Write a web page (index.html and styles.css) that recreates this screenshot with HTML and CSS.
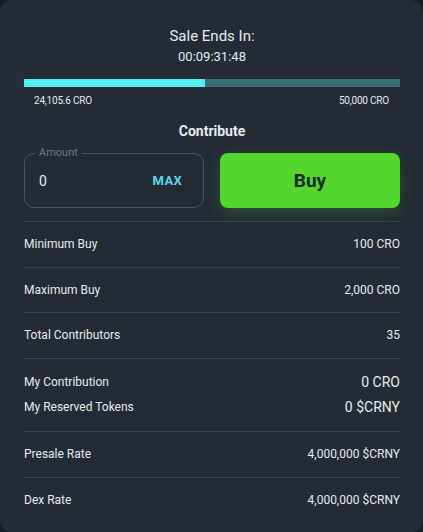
FILE: index.html
```html
<!doctype html>
<html lang="en">
<head>
	<meta charset="utf-8">
	<title>Presale</title>
<link rel="stylesheet" href="styles.css">
</head>
<body>
<div class="card">
	<div class="title">Sale Ends In:</div>
	<div class="timer">00:09:31:48</div>

	<div class="progress"><div class="progress-fill" style="width: 48.2%"></div></div>
	<div class="range">
		<span>24,105.6 CRO</span>
		<span>50,000 CRO</span>
	</div>

	<div class="heading">Contribute</div>
	<div class="contribute">
		<div class="amount">
			<span class="amount-label">Amount</span>
			<span class="amount-value">0</span>
			<span class="max">MAX</span>
		</div>
		<button class="buy">Buy</button>
	</div>

	<div class="rows">
		<div class="row"><span>Minimum Buy</span><span>100 CRO</span></div>
		<div class="row"><span>Maximum Buy</span><span>2,000 CRO</span></div>
		<div class="row"><span>Total Contributors</span><span>35</span></div>
		<div class="row row-double">
			<div class="line"><span>My Contribution</span><span class="big">0 CRO</span></div>
			<div class="line"><span>My Reserved Tokens</span><span class="big">0 $CRNY</span></div>
		</div>
		<div class="row"><span>Presale Rate</span><span>4,000,000 $CRNY</span></div>
		<div class="row"><span>Dex Rate</span><span>4,000,000 $CRNY</span></div>
	</div>
</div>
</body>
</html>
```

FILE: styles.css
```css
body {
	margin: 0;
	background: #161c23;
	color: #e8eaed;
	font-family: Roboto, "Liberation Sans", sans-serif;
}

.card {
	box-sizing: border-box;
	min-height: 532px;
	padding: 26px 23px 0 24px;
	background: #222b36;
	border-radius: 12px;
}

.title {
	text-align: center;
	font-size: 15px;
	line-height: 20px;
}

.timer {
	margin-top: 1px;
	text-align: center;
	font-size: 13px;
	line-height: 20px;
}

.progress {
	margin-top: 12px;
	height: 8px;
	background: #367077;
}

.progress-fill {
	height: 100%;
	background: #55f0f5;
}

.range {
	display: flex;
	justify-content: space-between;
	margin-top: 7px;
	padding: 0 11px 0 10px;
	font-size: 10px;
	line-height: 14px;
	letter-spacing: -0.2px;
}

.heading {
	margin-top: 13px;
	text-align: center;
	font-size: 14px;
	font-weight: 700;
	line-height: 20px;
}

.contribute {
	display: grid;
	grid-template-columns: 1fr 1fr;
	gap: 16px;
	margin-top: 12px;
}

.amount {
	position: relative;
	display: flex;
	align-items: center;
	justify-content: space-between;
	height: 55px;
	box-sizing: border-box;
	padding: 0 21px 0 14px;
	border: 1px solid #4a525d;
	border-radius: 10px;
}

.amount-label {
	position: absolute;
	top: -8px;
	left: 10px;
	padding: 0 4px;
	background: #222b36;
	color: #6e7782;
	font-size: 11px;
	line-height: 14px;
}

.amount-value {
	font-size: 14px;
}

.max {
	color: #56d9e6;
	font-size: 13px;
	font-weight: 700;
	letter-spacing: 0.3px;
}

.buy {
	height: 55px;
	border: 0;
	border-radius: 8px;
	background: #53d62e;
	box-shadow: 0 4px 16px rgba(83, 214, 46, 0.22);
	color: #1f2a30;
	font-family: inherit;
	font-size: 19px;
	font-weight: 700;
}

.rows {
	margin-top: 13px;
}

.row {
	display: flex;
	justify-content: space-between;
	align-items: center;
	padding: 12px 0 12.5px;
	border-top: 1px solid #38414c;
	font-size: 12px;
	line-height: 20px;
}

.row-double {
	display: block;
	padding: 13.5px 0 14px;
}

.line {
	display: flex;
	justify-content: space-between;
	align-items: center;
}

.line + .line {
	margin-top: 5px;
}

.big {
	font-size: 14px;
}
```
